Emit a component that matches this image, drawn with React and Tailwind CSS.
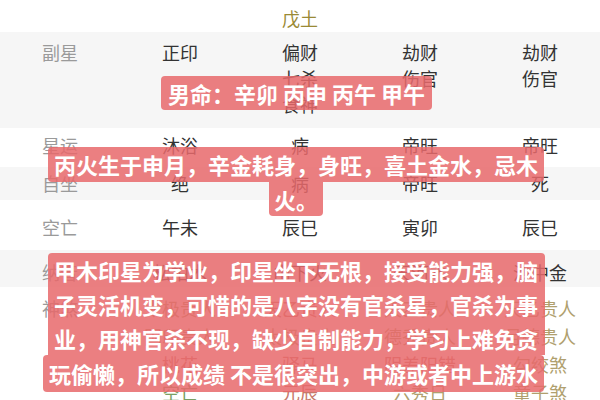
import React from "react";

const FONT = { fontFamily: '"Noto Sans CJK SC", "Noto Sans", sans-serif' };

function Cell({ lines, cls = "text-[#333]" }) {
  return (
    <div className="flex flex-col items-center">
      {lines.map((l, i) => {
        const [t, c] = Array.isArray(l) ? l : [l, cls];
        return (
          <span key={i} className={`whitespace-nowrap ${c}`}>
            {t}
          </span>
        );
      })}
    </div>
  );
}

function Row({ label, cols, bg, h, pt, lead = "leading-[26px]" }) {
  return (
    <div className={`grid grid-cols-5 ${bg} ${h} ${pt} ${lead} text-[18px]`}>
      <div className="flex justify-center text-[#9a9a9a]">{label}</div>
      {cols.map((c, i) => (
        <Cell key={i} lines={c} />
      ))}
    </div>
  );
}

const OL = "text-[#b09f6e]";
const RD = "text-[#c7786a]";
const GR = "text-[#7aa063]";

function Box({ children, cls }) {
  return (
    <div
      className={`bg-[#e8686b]/85 text-white font-bold text-[22px] whitespace-nowrap flex items-center ${cls}`}
    >
      {children}
    </div>
  );
}

export default function App() {
  return (
    <div
      className="relative w-[600px] h-[400px] overflow-hidden bg-white"
      style={FONT}
    >
      <div className="flex flex-col">
        <div className="grid grid-cols-5 h-[32px] pt-[5px] leading-[26px] text-[18px]">
          <div />
          <div />
          <div className="flex justify-center text-[#9a8a35]">戊土</div>
          <div />
          <div />
        </div>
        <Row
          label="副星"
          bg="bg-[#f6f6f6]"
          h="h-[96px]"
          pt="pt-[7px]"
          cols={[["正印"], ["偏财", "七杀", "食神"], ["劫财", "伤官"], ["劫财", "伤官"]]}
        />
        <Row
          label="星运"
          bg="bg-white"
          h="h-[39px]"
          pt="pt-[4px]"
          cols={[["沐浴"], ["病"], ["帝旺"], ["帝旺"]]}
        />
        <Row
          label="自坐"
          bg="bg-[#f6f6f6]"
          h="h-[33px]"
          pt="pt-[3px]"
          cols={[["绝"], ["病"], ["帝旺"], ["死"]]}
        />
        <Row
          label="空亡"
          bg="bg-white"
          h="h-[50px]"
          pt="pt-[14px]"
          cols={[["午未"], ["辰巳"], ["寅卯"], ["辰巳"]]}
        />
        <Row
          label="纳音"
          bg="bg-[#f6f6f6]"
          h="h-[37px]"
          pt="pt-[9px]"
          cols={[["松柏木"], ["山下火"], ["天河水"], ["沙中金"]]}
        />
        <Row
          label="神煞"
          bg="bg-white"
          h="h-[113px]"
          pt="pt-[7px]"
          lead="leading-[28px]"
          cols={[
            [["太极贵人", OL], ["国印贵人", OL], ["桃花", RD], ["空亡", GR]],
            [["天乙贵人", RD], ["太极贵人", OL], ["驿马", RD], ["元辰", RD]],
            [["天乙贵人", OL], ["德秀贵人", OL], ["阴差阳错", RD], ["六秀日", OL]],
            [["天乙贵人", OL], ["月德贵人", OL], ["勾绞煞", OL], ["童子煞", OL]],
          ]}
        />
      </div>

      {/* caption 1 */}
      <div className="absolute left-[161px] top-[76px]">
        <Box cls="h-[34px] px-[7px] rounded-[4px]">男命：辛卯 丙申 丙午 甲午</Box>
      </div>

      {/* caption 2 */}
      <div className="absolute left-[48px] top-[147px] w-[496px] flex flex-col items-center">
        <Box cls="h-[35px] px-[6px] rounded-[4px]">丙火生于申月，辛金耗身，身旺，喜土金水，忌木</Box>
        <Box cls="h-[34px] px-[5px] rounded-b-[4px]">火。</Box>
      </div>

      {/* caption 3 */}
      <div className="absolute left-[48px] top-[253px] w-[497px] bg-[#e8686b]/85 rounded-t-[4px] text-white font-bold text-[22px] leading-[34px] px-[6px] whitespace-nowrap">
        <div>甲木印星为学业，印星坐下无根，接受能力强，脑</div>
        <div>子灵活机变，可惜的是八字没有官杀星，官杀为事</div>
        <div>业，用神官杀不现，缺少自制能力，学习上难免贪</div>
      </div>
      <div className="absolute left-[43px] top-[355px]">
        <Box cls="h-[37px] px-[6px] rounded-[4px]">玩偷懒，所以成绩 不是很突出，中游或者中上游水</Box>
      </div>
    </div>
  );
}
